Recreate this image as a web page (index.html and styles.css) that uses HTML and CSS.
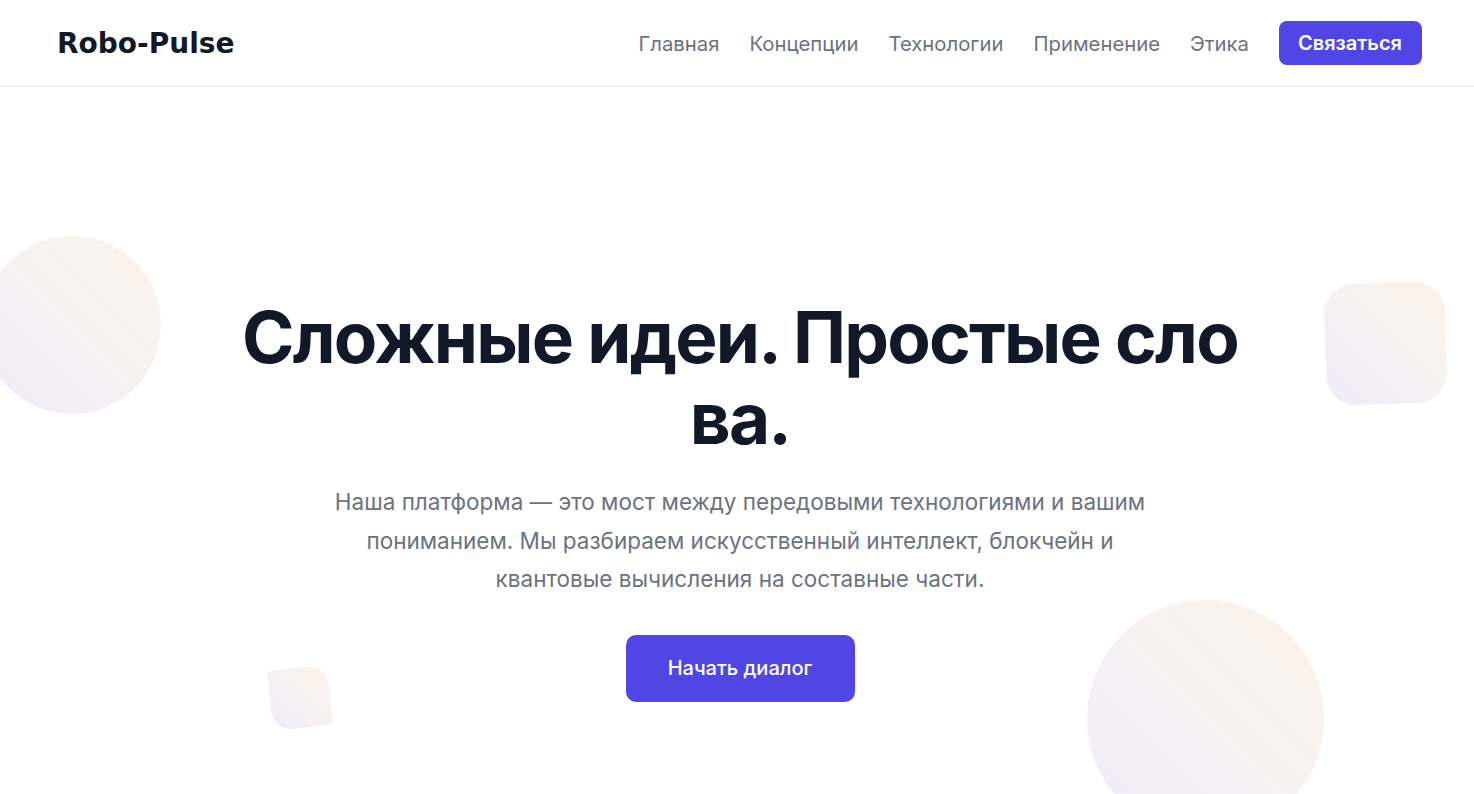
FILE: index.html
```html
<!DOCTYPE html>
<html lang="ru">
<head>
<meta charset="utf-8">
<title>Robo-Pulse</title>
<link rel="stylesheet" href="styles.css">
</head>
<body>
<header class="header">
  <div class="logo">Robo-Pulse</div>
  <nav class="nav">
    <a href="#" class="nav-link">Главная</a>
    <a href="#" class="nav-link">Концепции</a>
    <a href="#" class="nav-link">Технологии</a>
    <a href="#" class="nav-link">Применение</a>
    <a href="#" class="nav-link">Этика</a>
    <a href="#" class="nav-btn">Связаться</a>
  </nav>
</header>
<main class="hero">
  <div class="shape shape-circle-left"></div>
  <div class="shape shape-square-right"></div>
  <div class="shape shape-leaf"></div>
  <div class="shape shape-circle-bottom"></div>
  <div class="hero-content">
    <h1 class="hero-title">Сложные идеи. Простые слова.</h1>
    <p class="hero-text">Наша платформа — это мост между передовыми технологиями и вашим пониманием. Мы разбираем искусственный интеллект, блокчейн и квантовые вычисления на составные части.</p>
    <a href="#" class="hero-btn">Начать диалог</a>
  </div>
</main>
</body>
</html>
```
FILE: styles.css
```css
* { box-sizing: border-box; }
html, body { margin: 0; padding: 0; }
body {
  background: #ffffff;
  font-family: Inter, "Noto Sans", sans-serif;
  color: #111827;
  overflow: hidden;
}
.header {
  height: 87px;
  border-bottom: 1px solid #e5e7eb;
  display: flex;
  align-items: center;
  justify-content: space-between;
  padding: 0 52px 0 57px;
}
.logo {
  font-family: "DejaVu Sans", sans-serif;
  font-weight: 700;
  font-size: 28px;
  color: #111827;
}
.nav {
  display: flex;
  align-items: center;
  gap: 30px;
}
.nav-link {
  font-size: 20.3px;
  color: #6b7280;
  text-decoration: none;
}
.nav-btn {
  background: #4f46e5;
  color: #fff;
  text-decoration: none;
  font-size: 20px;
  font-weight: 600;
  height: 44px;
  padding: 0 20px 0 19px;
  display: flex;
  align-items: center;
  border-radius: 8px;
}
.hero {
  position: relative;
  height: 707px;
  overflow: hidden;
  display: flex;
  justify-content: center;
  padding: 210px 0 0 6px;
}
.hero-content {
  position: relative;
  z-index: 1;
  width: 1024px;
  display: flex;
  flex-direction: column;
  align-items: center;
  text-align: center;
}
.hero-title {
  margin: 0;
  font-weight: 700;
  font-size: 71px;
  line-height: 81px;
  letter-spacing: -0.025em;
  color: #111827;
  word-break: break-all;
}
.hero-text {
  margin: 24px 0 0;
  max-width: 830px;
  font-size: 22.5px;
  line-height: 38.5px;
  color: #6b7280;
}
.hero-btn {
  margin-top: 36px;
  width: 229px;
  height: 67px;
  border-radius: 10px;
  background: #4f46e5;
  color: #fff;
  text-decoration: none;
  font-size: 20px;
  font-weight: 500;
  display: flex;
  align-items: center;
  justify-content: center;
}
.shape {
  position: absolute;
  background: linear-gradient(45deg, #efecfb 0%, #f6f1f2 50%, #fcf2e6 100%);
}
.shape-circle-left {
  left: -17px;
  top: 149px;
  width: 178px;
  height: 178px;
  border-radius: 50%;
}
.shape-square-right {
  left: 1325px;
  top: 196px;
  width: 121px;
  height: 121px;
  border-radius: 30px;
  transform: rotate(-2deg);
}
.shape-leaf {
  left: 270px;
  top: 581px;
  width: 60px;
  height: 60px;
  border-radius: 4px 20px 4px 20px;
  transform: rotate(-6deg);
}
.shape-circle-bottom {
  left: 1087px;
  top: 513px;
  width: 237px;
  height: 237px;
  border-radius: 50%;
}
```
